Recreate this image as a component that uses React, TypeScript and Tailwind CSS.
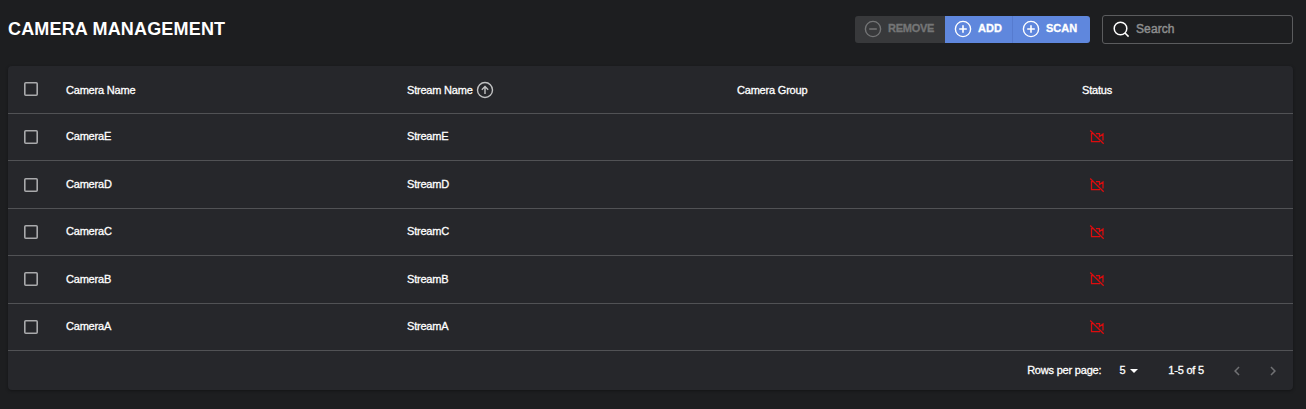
import React from "react";

const rows = [
  { id: "E", shift: "-mt-[2px]" },
  { id: "D", shift: "mt-0" },
  { id: "C", shift: "-mt-[2px]" },
  { id: "B", shift: "mt-0" },
  { id: "A", shift: "-mt-[2px]" },
];
const columns = "grid grid-cols-[58px_341px_330px_345px_1fr] items-center";
const label = "tracking-[-0.2px] [-webkit-text-stroke:0.3px_white]";

function Checkbox() {
  return (
    <svg width="18" height="18" viewBox="0 0 18 18" fill="none" stroke="#a9aaac" strokeWidth="1.6" className="ml-[14px]">
      <rect x="2.800" y="2.800" width="12.400" height="12.400" rx="1" />
    </svg>
  );
}

function CircleIcon({ plus }: { plus: boolean }) {
  return (
    <svg width="18" height="18" viewBox="0 0 18 18" fill="none" stroke="currentColor" strokeWidth="1.4" className="-mt-[1px] shrink-0">
      <circle cx="9" cy="9" r="7.6" />
      <path d={plus ? "M5.200 9h7.600M9 5.200v7.600" : "M5.200 9h7.600"} strokeWidth="1.6" />
    </svg>
  );
}

function CameraOff() {
  return (
    <svg width="16" height="16" viewBox="0 0 16 16" fill="none" stroke="#dc0c0e" strokeWidth="1.25" className="ml-[7px]">
      <path d="M1.200 1.500 14.700 14.700M4 4.500H2.500v8H11M7 4.500h3.500v3l3.500-2.500v6.500" />
    </svg>
  );
}

export default function App() {
  return (
    <main className="h-[409px] w-[1306px] overflow-hidden bg-[#1d1e20] pl-2 pr-[13px] font-['Liberation_Sans',Arial,sans-serif] text-[11px] text-white">
      <header className="flex h-[66px] items-start justify-between pt-[15px]">
        <h1 className="pt-[1px] text-[18px] font-bold leading-[26px] tracking-[0.17px]">CAMERA MANAGEMENT</h1>
        <div className="flex gap-3">
          <div className="mt-[1px] flex h-[27px] overflow-hidden rounded-[3px] text-[11px] font-bold">
            <button className="flex w-[90px] items-center gap-[6px] bg-[#38393b] pl-[9px] text-[#747576]">
              <CircleIcon plus={false} /><span className="-mt-[2px] tracking-[-0.25px] [-webkit-text-stroke:0.3px_#747576]">REMOVE</span>
            </button>
            <button className="flex w-[68px] items-center gap-[6px] border-r border-[#567bcf] bg-[#5f87dd] pl-[9px]">
              <CircleIcon plus /><span className="-mt-[2px] [-webkit-text-stroke:0.3px_white]">ADD</span>
            </button>
            <button className="flex w-[77px] items-center gap-[6px] bg-[#5f87dd] pl-[9px]">
              <CircleIcon plus /><span className="-mt-[2px] [-webkit-text-stroke:0.3px_white]">SCAN</span>
            </button>
          </div>
          <label className="flex h-[29px] w-[191px] items-center rounded-[3px] border border-[#5b5c5e] pl-[10px]">
            <svg width="17" height="17" viewBox="0 0 17 17" fill="none" stroke="white" strokeWidth="1.5" className="-mt-[1px] shrink-0">
              <circle cx="7.500" cy="7.500" r="6.300" />
              <path d="m12 12 3.600 3.600" />
            </svg>
            <input placeholder="Search" className="-mt-[1px] ml-[6px] w-[140px] bg-transparent text-[12px] tracking-[0.1px] outline-none [-webkit-text-stroke:0.45px_#8d8e8f] placeholder:text-[#8d8e8f]" />
          </label>
        </div>
      </header>
      <section className="h-[324px] rounded-[4px] bg-[#26272b] shadow-[0_1px_3px_rgba(0,0,0,0.35)]">
        <div className={`${columns} h-[48px] border-b border-[#515255]`}>
          <div className="-mt-[1px]"><Checkbox /></div>
          <span className={`${label} mt-[2px]`}>Camera Name</span>
          <span className={`${label} flex items-center gap-[3px]`}>
            <span className="mt-[2px]">Stream Name</span>
            <svg width="18" height="18" viewBox="0 0 18 18" fill="none" stroke="#c0c1c2" strokeWidth="1.4">
              <circle cx="9" cy="9" r="7.500" />
              <path d="M9 13V5.500M5.800 8.700 9 5.500l3.200 3.200" />
            </svg>
          </span>
          <span className={`${label} mt-[2px]`}>Camera Group</span>
          <span className={`${label} mt-[2px]`}>Status</span>
        </div>
        {rows.map(({ id, shift }) => (
          <div key={id} className={`${columns} h-[47.4px] border-b border-[#515255]`}>
            <Checkbox />
            <span className={`${label} ${shift}`}>Camera{id}</span>
            <span className={`${label} ${shift}`}>Stream{id}</span>
            <span />
            <CameraOff />
          </div>
        ))}
        <footer className={`${label} flex h-[39px] items-center justify-end pr-[12px]`}>
          <span>Rows per page:</span>
          <span className="ml-[18px]">5</span>
          <svg width="8" height="4" viewBox="0 0 8 4" className="ml-[5px] mt-[2px]" fill="white"><path d="M0 0h8L4 4z" /></svg>
          <span className="ml-[30px]">1-5 of 5</span>
          <svg width="18" height="18" viewBox="0 0 24 24" className="ml-[24px] mt-[1px]" fill="#707174"><path d="M15.410 7.410 14 6l-6 6 6 6 1.410-1.410L10.830 12z" /></svg>
          <svg width="18" height="18" viewBox="0 0 24 24" className="-mr-[1px] ml-[18px] mt-[1px]" fill="#707174"><path d="M10 6 8.590 7.410 13.170 12l-4.580 4.590L10 18l6-6z" /></svg>
        </footer>
      </section>
    </main>
  );
}
